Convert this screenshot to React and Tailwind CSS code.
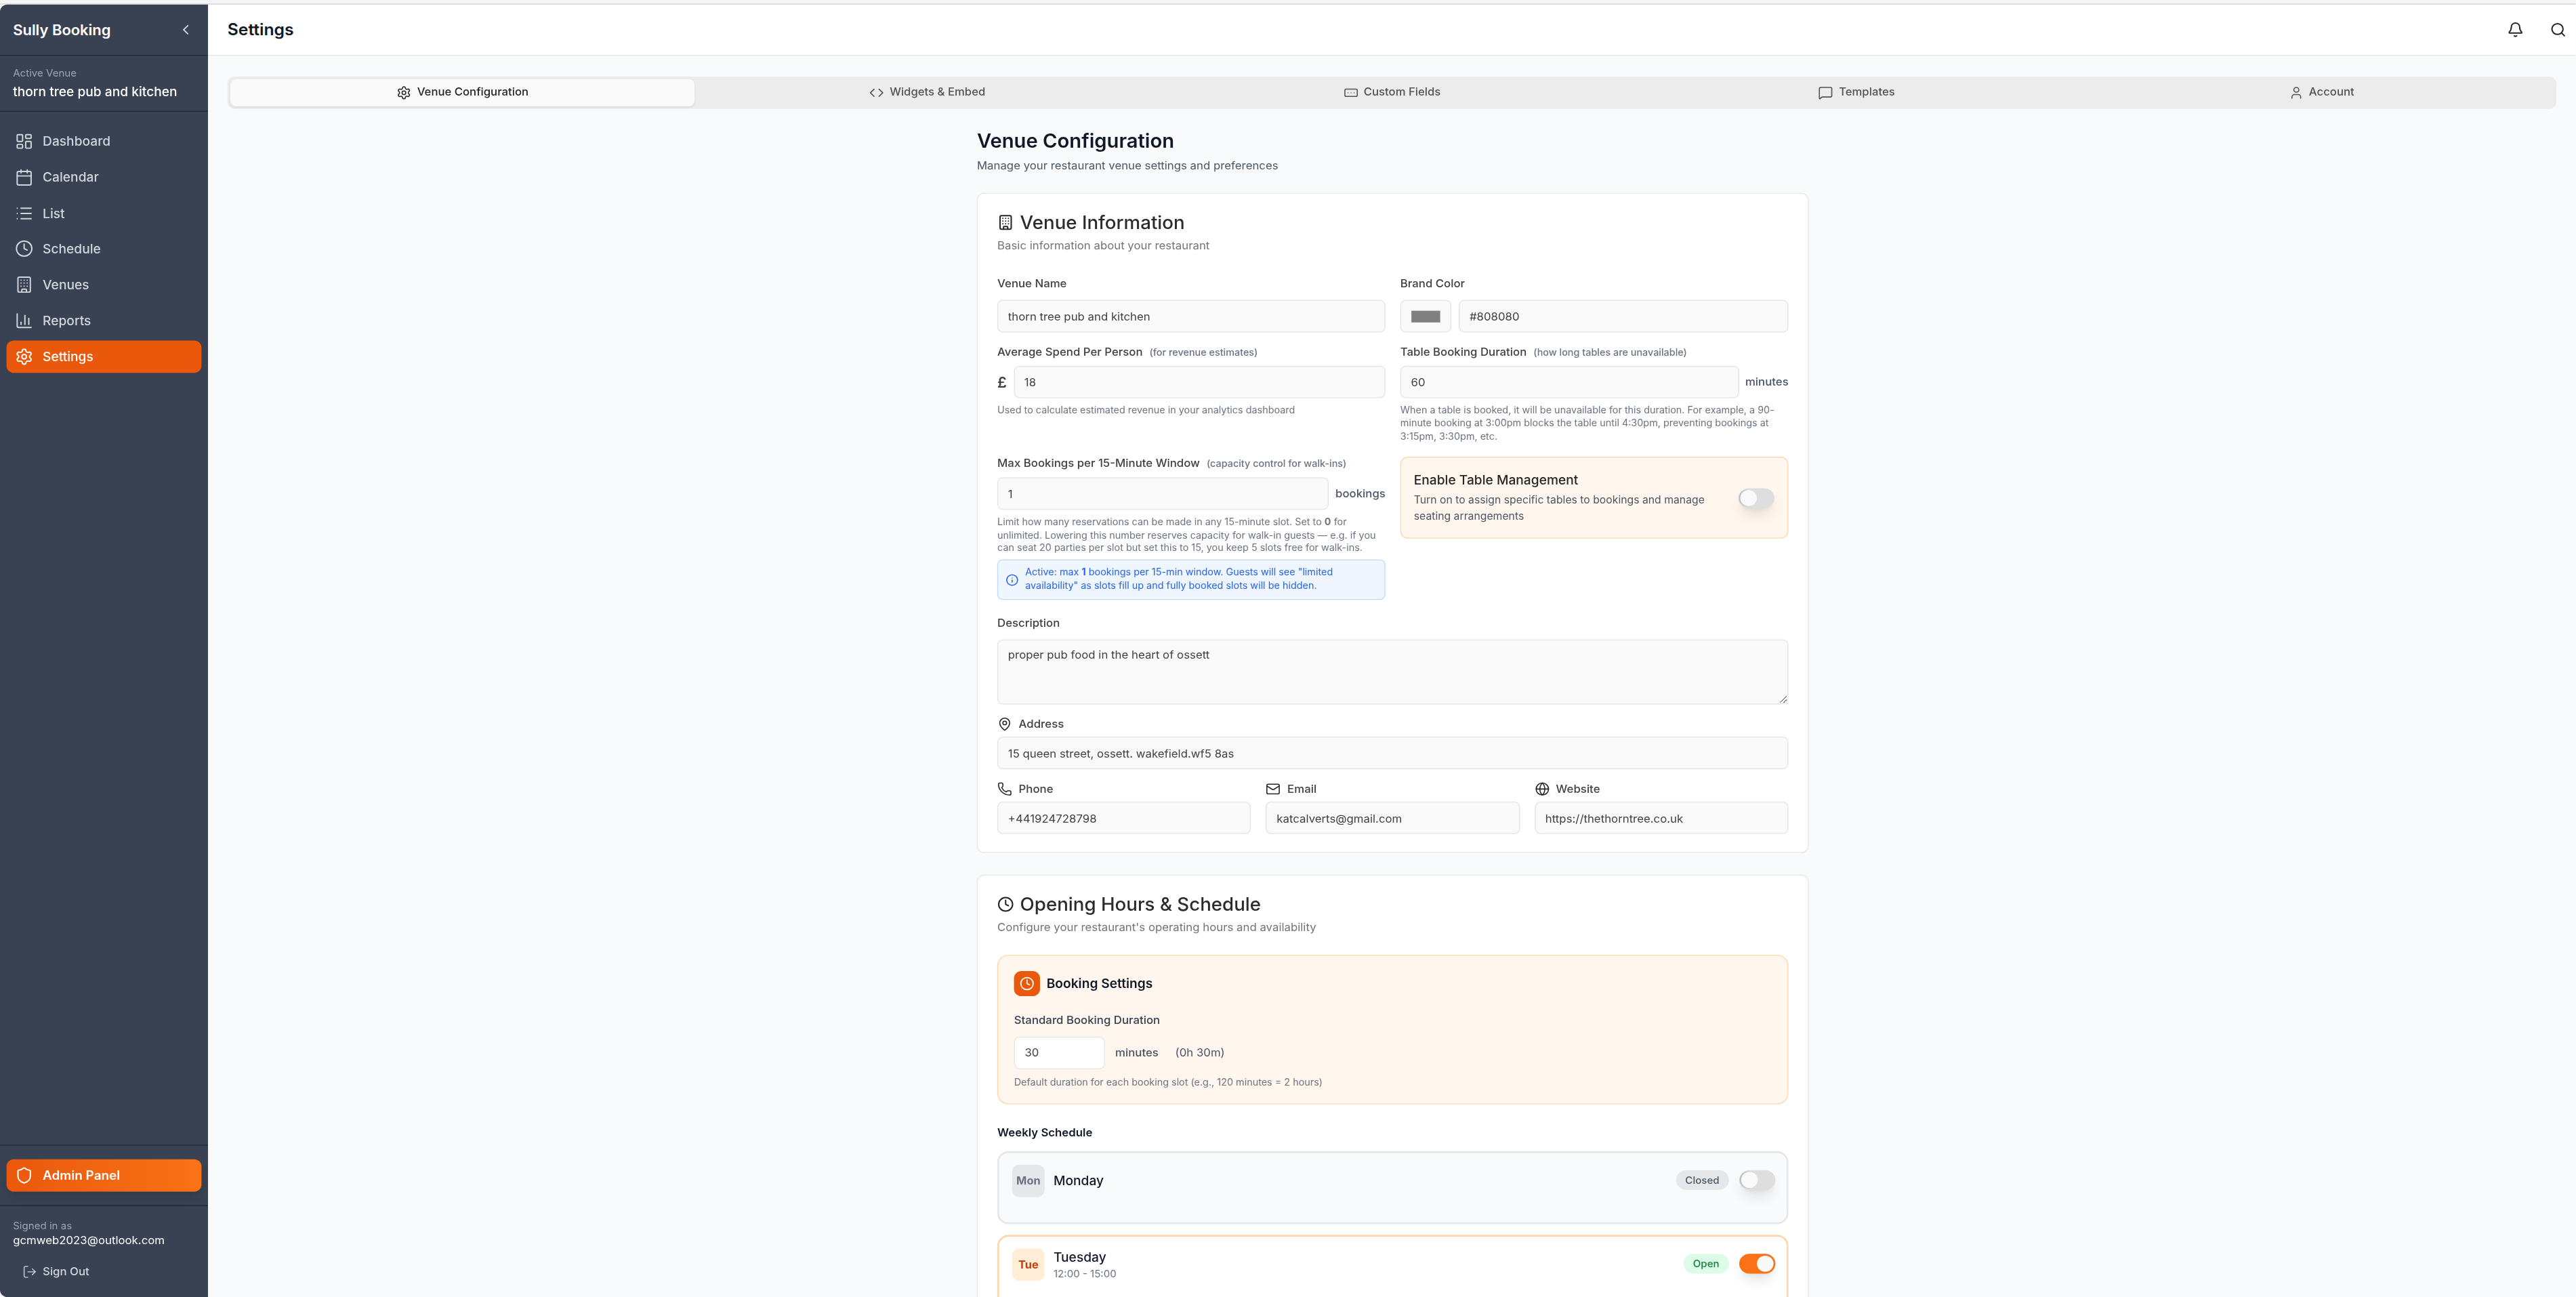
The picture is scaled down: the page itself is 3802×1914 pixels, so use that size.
import React from "react";
import { LayoutDashboard, Calendar, List, Clock, Building, ChartColumn, Settings, Shield, LogOut, ChevronLeft, Bell, Search, Code, RectangleEllipsis, MessageSquare, User, MapPin, Phone, Mail, Globe, Info } from "lucide-react";

const inputCls = "h-9 w-full rounded-md border border-[#e5e5e5] bg-[#fafafa] px-[10.5px] text-[12.25px] text-[#404040] outline-none";
const labelCls = "block text-[12.25px] leading-5 font-medium text-[#404040]";
const hintCls = "text-[10.5px] leading-[14.4px] text-[#6b7280]";
const subCls = "ml-1 text-[10.5px] font-medium text-[#6b7280]";

function Field({ value }) {
  return <input readOnly defaultValue={value} className={inputCls} />;
}

function Toggle({ on }) {
  return (
    <div className={"flex h-[22px] w-[39px] shrink-0 items-center rounded-full px-[2px] shadow-lg " + (on ? "justify-end bg-[#f97316]" : "justify-start bg-[#dedede]")}>
      <div className={"h-[18px] w-[18px] rounded-full bg-[#f9f9f9] " + (on ? "" : "shadow-[-1px_0_1px_#aaa]")} />
    </div>
  );
}

const nav = [
  [LayoutDashboard, "Dashboard"],
  [Calendar, "Calendar"],
  [List, "List"],
  [Clock, "Schedule"],
  [Building, "Venues"],
  [ChartColumn, "Reports"],
  [Settings, "Settings"],
];

const tabs = [
  [Settings, "Venue Configuration"],
  [Code, "Widgets & Embed"],
  [RectangleEllipsis, "Custom Fields"],
  [MessageSquare, "Templates"],
  [User, "Account"],
];

function Sidebar() {
  return (
    <aside className="flex h-full w-56 shrink-0 flex-col rounded-l-lg bg-[#394252]">
      <div className="flex h-[57px] items-center justify-between border-b border-[#1f2937] pl-[14px] pr-[15px]">
        <span className="text-base font-semibold text-white">Sully Booking</span>
        <ChevronLeft className="h-[18px] w-[18px] text-[#d1d5db]" strokeWidth={2} />
      </div>
      <div className="h-[62px] border-b border-[#1f2937] pl-[14px] pt-[11px]">
        <div className="text-[11px] leading-4 text-[#9ca3af]">Active Venue</div>
        <div className="mt-[3px] text-sm leading-5 font-medium text-white">thorn tree pub and kitchen</div>
      </div>
      <nav className="flex flex-1 flex-col gap-[3.75px] px-[7px] pt-[15px]">
        {nav.map(([Icon, label]) => {
          const active = label === "Settings";
          return (
            <div key={label} className={"flex h-9 items-center gap-2.5 rounded-lg pl-[9px] text-sm font-medium " + (active ? "bg-[#ea580c] text-white" : "text-[#d1d5db]")}>
              <Icon className="h-5 w-5" strokeWidth={1.75} />
              <span>{label}</span>
            </div>
          );
        })}
      </nav>
      <div className="border-t border-[#1f2937] px-[7px] py-[15px]">
        <div className="flex h-9 items-center gap-2.5 rounded-lg bg-gradient-to-r from-[#ea580c] to-[#f97316] pl-[9px] text-[13.8px] font-semibold text-white shadow-lg">
          <Shield className="h-5 w-5" strokeWidth={1.75} />
          <span>Admin Panel</span>
        </div>
      </div>
      <div className="h-[102px] border-t border-[#1f2937] pl-[14px] pt-[14px]">
        <div className="text-[11px] leading-4 text-[#9ca3af]">Signed in as</div>
        <div className="text-[12.25px] leading-4 text-white">gcmweb2023@outlook.com</div>
        <div className="ml-[10px] mt-[19px] flex items-center gap-1.5 text-[12.25px] leading-4 font-medium text-[#d1d5db]">
          <LogOut className="h-4 w-4" strokeWidth={1.5} />
          <span>Sign Out</span>
        </div>
      </div>
    </aside>
  );
}

function CardHead({ Icon, title, desc }) {
  return (
    <>
      <div className="flex items-center gap-[6.5px]">
        <Icon className="h-[18px] w-[18px] text-[#262626]" strokeWidth={2} />
        <h2 className="text-[20.2px] leading-7 font-medium text-[#2b2b2b]">{title}</h2>
      </div>
      <p className="mt-[2px] text-[12.25px] leading-5 text-[#737373]">{desc}</p>
    </>
  );
}

function IconLabel({ Icon, text }) {
  return (
    <div className="flex items-center gap-[7px]">
      <Icon className="h-4 w-4 text-[#262626]" strokeWidth={1.75} />
      <span className={labelCls}>{text}</span>
    </div>
  );
}

function VenueCard() {
  return (
    <section className="rounded-lg border border-[#e5e7eb] bg-white px-[21px] pb-5 pt-[18px]">
      <CardHead Icon={Building} title="Venue Information" desc="Basic information about your restaurant" />
      <div className="mt-[22px] grid grid-cols-2 gap-x-4 gap-y-3">
        <div>
          <label className={labelCls}>Venue Name</label>
          <div className="mt-2"><Field value="thorn tree pub and kitchen" /></div>
        </div>
        <div>
          <label className={labelCls}>Brand Color</label>
          <div className="mt-2 flex gap-2">
            <div className="flex h-9 w-[55px] shrink-0 items-center justify-center rounded-md border border-[#e5e5e5] bg-[#fafafa]">
              <div className="h-[13px] w-[31px] bg-[#808080]" />
            </div>
            <Field value="#808080" />
          </div>
        </div>
        <div>
          <label className={labelCls}>Average Spend Per Person <span className={subCls}>(for revenue estimates)</span></label>
          <div className="mt-1 flex items-center gap-[7px]">
            <span className="w-[11px] text-base font-semibold text-[#404040]">£</span>
            <Field value="18" />
          </div>
          <p className={hintCls + " mt-[7px]"}>Used to calculate estimated revenue in your analytics dashboard</p>
        </div>
        <div>
          <label className={labelCls}>Table Booking Duration <span className={subCls}>(how long tables are unavailable)</span></label>
          <div className="mt-1 flex items-center gap-[7px]">
            <Field value="60" />
            <span className="text-[12.25px] font-medium text-[#4b5563]">minutes</span>
          </div>
          <p className={hintCls + " mt-[7px]"}>When a table is booked, it will be unavailable for this duration. For example, a 90-minute booking at 3:00pm blocks the table until 4:30pm, preventing bookings at 3:15pm, 3:30pm, etc.</p>
        </div>
        <div>
          <label className={labelCls}>Max Bookings per 15-Minute Window <span className={subCls}>(capacity control for walk-ins)</span></label>
          <div className="mt-[5px] flex items-center gap-[7px]">
            <Field value="1" />
            <span className="text-[12.25px] font-medium text-[#4b5563]">bookings</span>
          </div>
          <p className={hintCls + " mt-[7px]"}>Limit how many reservations can be made in any 15-minute slot. Set to <b className="font-bold">0</b> for unlimited. Lowering this number reserves capacity for walk-in guests — e.g. if you can seat 20 parties per slot but set this to 15, you keep 5 slots free for walk-ins.</p>
          <div className="mt-[5px] flex items-center gap-[7px] rounded-md border border-[#bfdbfe] bg-[#eff6ff] px-[8px] py-[7px]">
            <Info className="h-[14px] w-[14px] shrink-0 text-[#2563eb]" strokeWidth={2} />
            <p className="text-[10.5px] leading-[14.4px] text-[#2563eb]">Active: max <b className="font-bold">1</b> bookings per 15-min window. Guests will see "limited availability" as slots fill up and fully booked slots will be hidden.</p>
          </div>
        </div>
        <div>
          <div className="mt-[3px] flex items-center gap-2 rounded-lg border border-[#fed7aa] bg-[#fff7ed] py-[15px] pl-[13.5px] pr-[14px]">
            <div className="flex-1">
              <div className="text-sm leading-5 font-medium text-[#262626]">Enable Table Management</div>
              <div className="mt-[3px] text-[11.5px] leading-[18px] text-[#4b5563]">Turn on to assign specific tables to bookings and manage seating arrangements</div>
            </div>
            <Toggle />
          </div>
        </div>
      </div>
      <div className="mt-4">
        <label className={labelCls}>Description</label>
        <textarea readOnly defaultValue="proper pub food in the heart of ossett" className="mt-2 block h-[72px] w-full rounded-md border border-[#e5e5e5] bg-[#fafafa] px-[10.5px] py-[7px] text-[12.25px] text-[#404040] outline-none" />
      </div>
      <div className="mt-3">
        <IconLabel Icon={MapPin} text="Address" />
        <div className="mt-1"><Field value="15 queen street, ossett. wakefield.wf5 8as" /></div>
      </div>
      <div className="mt-3 grid grid-cols-3 gap-4">
        <div>
          <IconLabel Icon={Phone} text="Phone" />
          <div className="mt-1"><Field value="+441924728798" /></div>
        </div>
        <div>
          <IconLabel Icon={Mail} text="Email" />
          <div className="mt-1"><Field value="katcalverts@gmail.com" /></div>
        </div>
        <div>
          <IconLabel Icon={Globe} text="Website" />
          <div className="mt-1"><Field value="https://thethorntree.co.uk" /></div>
        </div>
      </div>
    </section>
  );
}

function DayRow({ abbr, name, time, open }) {
  return (
    <div className={"flex items-start rounded-xl border-2 pl-[14px] pr-[12.5px] pt-[13px] pb-[28px] " + (open ? "border-[#fed7aa] bg-white" : "border-[#e5e7eb] bg-[#f9fafb]")}>
      <div className={"flex h-9 w-[35px] items-center justify-center rounded-lg text-xs font-bold " + (open ? "bg-[#ffedd5] text-[#c2410c]" : "bg-[#e5e7eb] text-[#6b7280]")}>{abbr}</div>
      <div className="ml-[9.5px] flex h-9 flex-1 flex-col justify-center">
        <div className="text-sm leading-5 font-medium text-[#111827]">{name}</div>
        {time && <div className="text-[11px] leading-4 text-[#6b7280]">{time}</div>}
      </div>
      <div className="mt-[6px] flex items-center gap-[11px]">
        <span className={"flex h-[22px] items-center rounded-full px-[10px] text-[11px] font-medium " + (open ? "bg-[#dcfce7] text-[#15803d]" : "bg-[#e5e7eb] text-[#4b5563]")}>{open ? "Open" : "Closed"}</span>
        <Toggle on={open} />
      </div>
    </div>
  );
}

function ScheduleCard() {
  return (
    <section className="mt-6 rounded-lg border border-[#e5e7eb] bg-white px-[21px] pb-5 pt-[18px]">
      <CardHead Icon={Clock} title="Opening Hours & Schedule" desc="Configure your restaurant's operating hours and availability" />
      <div className="mt-[20px] h-[166px] rounded-xl border border-[#fed7aa] bg-[#fff7ed] p-[17px]">
        <div className="flex items-center gap-[7px]">
          <div className="flex h-[28px] w-[28px] items-center justify-center rounded-lg bg-[#ea580c]">
            <Clock className="h-4 w-4 text-white" strokeWidth={2} />
          </div>
          <span className="text-sm font-semibold text-[#111827]">Booking Settings</span>
        </div>
        <div className="mt-[16.5px] text-[12.25px] leading-5 font-medium text-[#374151]">Standard Booking Duration</div>
        <div className="mt-2 flex items-center text-[12.25px] text-[#4b5563]">
          <input readOnly defaultValue="30" className="h-9 w-[98px] rounded-md border border-[#e5e5e5] bg-white px-[10.5px] text-[12.25px] text-[#404040] outline-none" />
          <span className="ml-[11px] font-medium">minutes</span>
          <span className="ml-[18px]">(0h 30m)</span>
        </div>
        <p className="mt-[8px] text-[10.5px] leading-[14px] text-[#6b7280]">Default duration for each booking slot (e.g., 120 minutes = 2 hours)</p>
      </div>
      <h3 className="mt-[22px] text-[12.25px] leading-5 font-semibold text-[#111827]">Weekly Schedule</h3>
      <div className="mt-[10px] flex flex-col gap-3">
        <DayRow abbr="Mon" name="Monday" />
        <DayRow abbr="Tue" name="Tuesday" time="12:00 - 15:00" open />
      </div>
    </section>
  );
}

function Main() {
  return (
    <main className="flex h-full flex-1 flex-col overflow-hidden bg-[#f9fafb]">
      <header className="flex h-[57px] shrink-0 items-center justify-between border-b border-[#e5e7eb] bg-white pl-[21px] pr-[10.7px]">
        <h1 className="text-lg font-semibold text-[#111827]">Settings</h1>
        <div className="flex items-center gap-[27.3px] text-[#262626]">
          <Bell className="h-[18px] w-[18px]" strokeWidth={2} />
          <Search className="h-[18px] w-[18px]" strokeWidth={2} />
        </div>
      </header>
      <div className="px-[21px] pt-[22.5px]">
        <div className="grid h-9 grid-cols-5 rounded-lg bg-[#ececec] p-[3px]">
          {tabs.map(([Icon, label], i) => (
            <div key={label} className={"flex items-center justify-center gap-1.5 rounded-md text-[12.2px] font-medium " + (i === 0 ? "bg-[#fafafa] text-[#262626] shadow-[0_1px_2px_rgba(0,0,0,0.05)]" : "text-[#525252]")}>
              <Icon className="h-4 w-4" strokeWidth={1.75} />
              <span>{label}</span>
            </div>
          ))}
        </div>
      </div>
      <div className="pl-[23px] pr-[21px]">
        <div className="mx-auto mt-[19.5px] max-w-4xl">
          <h2 className="text-[21.3px] leading-8 font-semibold text-[#111827]">Venue Configuration</h2>
          <p className="mt-[2px] text-[12.25px] leading-5 text-[#4b5563]">Manage your restaurant venue settings and preferences</p>
          <div className="mt-5">
            <VenueCard />
            <ScheduleCard />
          </div>
        </div>
      </div>
    </main>
  );
}

export default function App() {
  return (
    <div className="h-[1914px] w-[3802px] overflow-hidden bg-[#f5f5f5]">
      <div className="h-[1440px] w-[2774.2px] origin-top-left [transform:scale(1.3705,1.3292)] font-['Inter',sans-serif]">
        <div className="h-[5px] border-b border-[#d4d4d4]" />
        <div className="flex h-[1435px]">
          <Sidebar />
          <Main />
        </div>
      </div>
    </div>
  );
}
